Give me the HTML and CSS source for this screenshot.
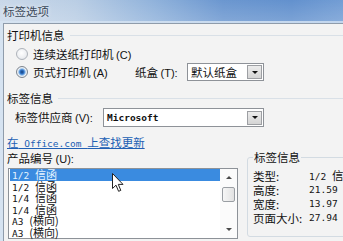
FILE: index.html
```html
<!DOCTYPE html>
<html>
<head>
<meta charset="utf-8">
<link rel="stylesheet" href="styles.css">
</head>
<body>
<div class="window">
  <div class="titlebar">标签选项</div>
  <div class="frame">
    <div class="content">
      <div class="group-head g1"><span>打印机信息</span><i class="rule"></i></div>
      <div class="radio-row r1"><span class="radio"></span><span class="lbl">连续送纸打印机 <span class="p">(C)</span></span></div>
      <div class="radio-row r2">
        <span class="radio checked"></span>
        <span class="lbl fixed">页式打印机 <span class="p">(A)</span></span>
        <span class="tray-label">纸盒 <span class="p">(T):</span></span>
        <div class="select tray"><span class="val">默认纸盒</span><span class="btn"><i class="tri"></i></span></div>
      </div>
      <div class="group-head g2"><span>标签信息</span><i class="rule"></i></div>
      <div class="vendor-row">
        <span class="vlabel">标签供应商 <span class="p">(V):</span></span>
        <div class="select vendor"><span class="val m bold">Microsoft</span><span class="btn"><i class="tri"></i></span></div>
      </div>
      <div class="link-row"><a class="link">在<span class="m"> Office.com </span>上查找更新</a></div>
      <div class="bottom">
        <div class="left">
          <div class="plabel">产品编号 <span class="p">(U):</span></div>
          <div class="listbox">
            <ul class="items">
              <li class="sel"><span class="m">1/2 </span>信函</li>
              <li><span class="m">1/2 </span>信函</li>
              <li><span class="m">1/4 </span>信函</li>
              <li><span class="m">1/4 </span>信函</li>
              <li><span class="m">A3 </span>(横向)</li>
              <li><span class="m">A3 </span>(横向)</li>
            </ul>
            <div class="scrollbar">
              <div class="sb-btn"><i class="arrow up"></i></div>
              <div class="track"><div class="thumb"></div></div>
              <div class="sb-btn"><i class="arrow down"></i></div>
            </div>
          </div>
        </div>
        <fieldset class="info">
          <legend>标签信息</legend>
          <div class="info-grid">
            <span>类型:</span><span><span class="m">1/2 </span>信函</span>
            <span>高度:</span><span class="m">21.59 厘米</span>
            <span>宽度:</span><span class="m">13.97 厘米</span>
            <span>页面大小:</span><span class="m">27.94 x 21.59</span>
          </div>
        </fieldset>
      </div>
    </div>
  </div>
  <svg class="cursor" width="13" height="20" viewBox="0 0 13 20">
    <path d="M0.5 0.5 L0.5 15.5 L4 12.2 L6.6 18.3 L8.8 17.4 L6.3 11.4 L11 11.4 Z" fill="#fff" stroke="#222" stroke-width="1" stroke-linejoin="round"/>
  </svg>
</div>
</body>
</html>
```

FILE: styles.css
```css
html, body {
  margin: 0;
  padding: 0;
}
body {
  width: 343px;
  height: 241px;
  overflow: hidden;
  font-family: "Noto Sans CJK SC", sans-serif;
  font-size: 11.5px;
  line-height: 14px;
  color: #111;
  background: #f3f3f3;
}
.m {
  font-family: "DejaVu Sans Mono", "Noto Sans CJK SC", monospace;
  font-size: 9.5px;
}
.p {
  font-family: "Liberation Sans", sans-serif;
  font-size: 11px;
}
.bold { font-weight: bold; }

.window {
  position: relative;
  width: 343px;
  height: 241px;
}
.titlebar {
  height: 21px;
  line-height: 22px;
  padding-left: 3px;
  color: #3b4858;
  text-shadow: 0 0 4px rgba(255,255,255,0.8);
  background:
    linear-gradient(to bottom, rgba(255,255,255,0.05) 0%, rgba(255,255,255,0.2) 100%),
    linear-gradient(to right, #c7d6e8 0%, #b6cbe3 22%, #8aaed9 45%, #6391cd 65%, #5a8bcb 85%, #6b98d2 100%);
}
.frame {
  padding: 2px 0 0 3px;
  background: linear-gradient(to right, #d6e3f1, #c2d6ee);
  height: 218px;
}
.content {
  height: 100%;
  border-left: 1px solid #8f9cab;
  border-top: 1px solid #8f9cab;
  background: #f3f3f3;
  padding-left: 3px;
  box-sizing: border-box;
}

.group-head {
  display: flex;
  align-items: center;
  height: 14px;
}
.group-head .rule {
  flex: 1;
  height: 1px;
  margin-left: 5px;
  background: #d9e0e7;
}
.g1 { margin-top: 4px; }
.g2 { margin-top: 10px; }

.radio-row {
  display: flex;
  align-items: center;
  padding-left: 9px;
}
.r1 { height: 14px; margin-top: 5px; }
.r2 { height: 18px; margin-top: 2px; }
.radio {
  width: 12px;
  height: 12px;
  box-sizing: border-box;
  border-radius: 50%;
  border: 1px solid #aeb3ba;
  background: radial-gradient(circle at 45% 40%, #ffffff 0, #eceef1 60%, #d9dce1 100%);
  margin-right: 5px;
  flex: none;
}
.radio.checked {
  border-color: #7d858f;
  background: radial-gradient(circle at 50% 50%, #163f7a 0, #2f74c8 2px, #8dbbea 3.2px, #eef2f6 4.2px, #d8dce2 100%);
}
.lbl.fixed { width: 102px; }
.tray-label { width: 52px; }

.select {
  display: flex;
  align-items: center;
  height: 18px;
  box-sizing: border-box;
  border: 1px solid #8e9298;
  background: #fff;
}
.select .val {
  padding-left: 3px;
  flex: 1;
  white-space: nowrap;
}
.select .btn {
  width: 15px;
  height: 14px;
  margin-right: 1px;
  border: 1px solid #9d9fa3;
  box-sizing: border-box;
  background: linear-gradient(#ececec, #d4d4d4);
  display: flex;
  align-items: center;
  justify-content: center;
}
.tri {
  width: 0;
  height: 0;
  border-left: 3px solid transparent;
  border-right: 3px solid transparent;
  border-top: 3px solid #111;
}
.tray { width: 77px; }
.vendor { width: 161px; }

.vendor-row {
  display: flex;
  align-items: center;
  height: 19px;
  margin-top: 3px;
  padding-left: 8px;
}
.vendor-row .select { height: 19px; }
.vlabel { width: 88px; }

.link-row {
  height: 14px;
  margin-top: 8px;
}
.link {
  color: #2160b4;
  text-decoration: underline;
}

.bottom {
  display: flex;
  margin-top: 2px;
  align-items: flex-start;
}
.left { width: 231px; }
.plabel { height: 14px; }
.listbox {
  margin: 3px 0 0 1px;
  width: 230px;
  height: 71px;
  box-sizing: border-box;
  border: 1px solid #8d9298;
  background: #fff;
  display: flex;
}
.items {
  list-style: none;
  margin: 0;
  padding: 0 0 0 1px;
  flex: 1;
  line-height: 11.5px;
  font-size: 11px;
  white-space: nowrap;
}
.items li {
  height: 11.5px;
  padding-left: 2px;
}
.items li.sel {
  background: #3a8be0;
  color: #e6f4ff;
}
.scrollbar {
  width: 17px;
  display: flex;
  flex-direction: column;
  background: #fbfbfb;
}
.sb-btn {
  height: 17px;
  display: flex;
  align-items: center;
  justify-content: center;
}
.track { flex: 1; }
.thumb {
  margin: 1px 2px 0 2px;
  height: 13px;
  border: 1px solid #9a9ea3;
  border-radius: 2px;
  background: linear-gradient(to right, #f6f6f6, #e2e2e2);
}
.arrow {
  width: 0;
  height: 0;
  border-left: 3px solid transparent;
  border-right: 3px solid transparent;
}
.arrow.up { border-bottom: 3px solid #4a4a4a; }
.arrow.down { border-top: 3px solid #4a4a4a; }

.info {
  margin: -1px 0 0 9px;
  padding: 5px 0 11px 5px;
  width: 130px;
  flex: none;
  border: 1px solid #d3dbe2;
  border-radius: 3px;
}
.info legend {
  padding: 0 1px;
  margin-left: 0;
  line-height: 14px;
}
.info-grid {
  display: grid;
  grid-template-columns: 56px auto;
  grid-auto-rows: 14px;
  align-items: center;
  white-space: nowrap;
}

.cursor {
  position: absolute;
  left: 112px;
  top: 173px;
}
```
